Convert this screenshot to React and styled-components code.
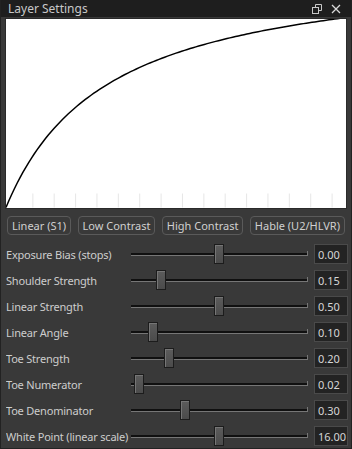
import React from 'react'
import styled, { createGlobalStyle } from 'styled-components'

const GlobalStyle = createGlobalStyle`
  html, body {
    margin: 0;
    padding: 0;
    background: #1b1b1b;
  }
  * { box-sizing: border-box; }
`

const presets = ['Linear (S1)', 'Low Contrast', 'High Contrast', 'Hable (U2/HLVR)']

const settings = [
  { label: 'Exposure Bias (stops)', value: '0.00', pos: 0.5 },
  { label: 'Shoulder Strength', value: '0.15', pos: 0.1375 },
  { label: 'Linear Strength', value: '0.50', pos: 0.5 },
  { label: 'Linear Angle', value: '0.10', pos: 0.0875 },
  { label: 'Toe Strength', value: '0.20', pos: 0.1875 },
  { label: 'Toe Numerator', value: '0.02', pos: 0.0 },
  { label: 'Toe Denominator', value: '0.30', pos: 0.29 },
  { label: 'White Point (linear scale)', value: '16.00', pos: 0.5 },
]

// handle travel inside the slider, in px
const TRAVEL = 160

const buildCurve = (w, h) => {
  const k = 0.3
  const pts = []
  for (let i = 0; i <= 120; i++) {
    const x = i / 120
    const y = (x * (1 + k)) / (x + k)
    pts.push(`${(x * w).toFixed(2)},${(h - y * (h + 2)).toFixed(2)}`)
  }
  return pts.join(' ')
}

const Curve = () => {
  const w = 342
  const h = 189
  const ticks = []
  for (let x = 27; x < w; x += 21.5) ticks.push(x)
  return (
    <svg width={w} height={h} viewBox={`0 0 ${w} ${h}`}>
      {ticks.map(x => (
        <line key={x} x1={x} x2={x} y1={h - 14} y2={h} stroke="#e6e6e6" strokeWidth="1" />
      ))}
      <polyline points={buildCurve(w, h)} fill="none" stroke="#000" strokeWidth="1.5" />
    </svg>
  )
}

const App = () => (
  <Window>
    <GlobalStyle />
    <TitleBar>
      <Title>Layer Settings</Title>
      <TitleIcons>
        <svg width="10" height="10" viewBox="0 0 10 10">
          <rect x="0.5" y="3.5" width="6" height="6" fill="none" stroke="#c8c8c8" />
          <path d="M3.5 3.5 V0.5 H9.5 V6.5 H6.5" fill="none" stroke="#c8c8c8" />
        </svg>
        <svg width="10" height="10" viewBox="0 0 10 10">
          <path d="M1 1 L9 9 M9 1 L1 9" stroke="#d8d8d8" strokeWidth="1.3" />
        </svg>
      </TitleIcons>
    </TitleBar>
    <Body>
      <Graph>
        <Curve />
      </Graph>
      <PresetRow>
        {presets.map(p => (
          <PresetButton key={p}>{p}</PresetButton>
        ))}
      </PresetRow>
      <Settings>
        {settings.map(s => (
          <SettingRow key={s.label}>
            <Label>{s.label}</Label>
            <Slider>
              <Track />
              <TrackEnd />
              <Handle style={{ left: `${3 + s.pos * TRAVEL}px` }} />
            </Slider>
            <ValueBox>{s.value}</ValueBox>
          </SettingRow>
        ))}
      </Settings>
    </Body>
  </Window>
)

const Window = styled.div`
  width: 352px;
  height: 449px;
  display: flex;
  flex-direction: column;
  background: #393939;
  border: 1px solid #222;
  border-top: none;
  font-family: "Noto Sans", "DejaVu Sans", sans-serif;
  color: #cfcfcf;
`

const TitleBar = styled.div`
  height: 19px;
  display: flex;
  align-items: center;
  justify-content: space-between;
  background: #1e1e1e;
  padding: 0 10px 0 7px;
`

const Title = styled.div`
  font-size: 12px;
  color: #c8c8c8;
`

const TitleIcons = styled.div`
  display: flex;
  align-items: center;
  gap: 9px;
`

const Body = styled.div`
  flex: 1;
  display: flex;
  flex-direction: column;
  padding: 1px 4px 0 4px;
`

const Graph = styled.div`
  height: 191px;
  background: #fff;
  border: 1px solid #2a2a2a;
  display: flex;
  align-items: flex-end;
`

const PresetRow = styled.div`
  display: flex;
  justify-content: space-between;
  padding: 7px 2px 0 2px;
`

const PresetButton = styled.div`
  height: 19px;
  padding: 0 4px;
  display: flex;
  align-items: center;
  font-size: 11px;
  color: #d0d0d0;
  border: 1px solid #5a5a5a;
  border-radius: 4px;
  background: #393939;
`

const Settings = styled.div`
  display: flex;
  flex-direction: column;
  padding-top: 6px;
`

const SettingRow = styled.div`
  height: 26px;
  display: grid;
  grid-template-columns: 125px 177px 34px;
  align-items: center;
  column-gap: 0;
  padding-left: 1px;
`

const Label = styled.div`
  font-size: 11px;
  letter-spacing: -0.2px;
  color: #cdcdcd;
  white-space: nowrap;
  overflow: hidden;
`

const Slider = styled.div`
  position: relative;
  height: 20px;
`

const Track = styled.div`
  position: absolute;
  left: 0;
  right: 0;
  top: 9px;
  height: 3px;
  border-top: 2px solid #101010;
  border-bottom: 1px solid #767676;
`

const TrackEnd = styled.div`
  position: absolute;
  right: 0;
  top: 7px;
  width: 1px;
  height: 5px;
  background: #767676;
`

const Handle = styled.div`
  position: absolute;
  top: 0;
  width: 10px;
  height: 20px;
  background: linear-gradient(#5c5c5c, #4b4b4b);
  border: 1px solid #1c1c1c;
  box-shadow: inset 1px 1px 0 #767676;
`

const ValueBox = styled.div`
  height: 20px;
  margin-left: 6px;
  width: 34px;
  display: flex;
  align-items: center;
  padding-left: 3px;
  font-size: 11px;
  color: #d6d6d6;
  background: #232323;
  border: 1px solid #4a4a4a;
`

export default App
